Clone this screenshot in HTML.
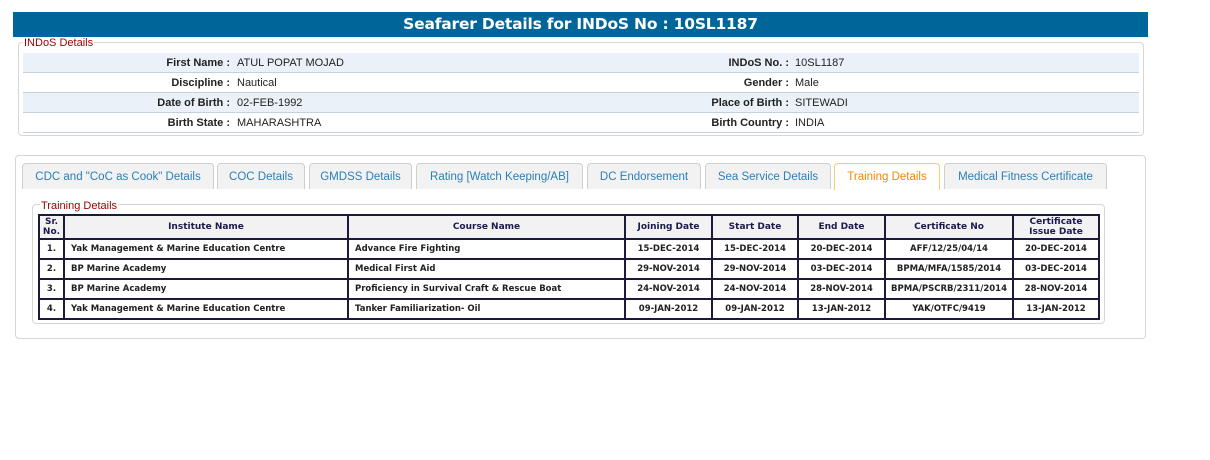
<!DOCTYPE html>
<html><head><style>
*{margin:0;padding:0;box-sizing:border-box}
body{width:1210px;height:460px;background:#fff;font-family:"Liberation Sans",Arial,sans-serif;position:relative;overflow:hidden}
.a{position:absolute}
.hdr{left:13px;top:12px;width:1135px;height:25px;background:#006699;color:#fff;font:bold 15.5px "DejaVu Sans",sans-serif;text-align:center;line-height:25px;letter-spacing:-0.2px}
.fs{border:1px solid #d6d6d6;border-radius:4px}
.lg{background:#fff;color:#990000;font-size:11px;padding:0 1px;line-height:12px}
.row{left:23px;width:1116px;height:20px;border-bottom:1px solid #c8d0d8;font-size:11px;color:#222;line-height:20px}
.row.b{background:#eaf1f8}
.row span{position:absolute}
.l{text-align:right}
.tab{top:163px;height:26px;border:1px solid #cfcfcf;border-bottom:none;border-radius:4px 4px 0 0;background:#f2f2f2;color:#2a7fb8;font-size:11.5px;text-align:center;line-height:26px}
.tab.on{background:#fff;border-color:#f0d070;color:#f08a00;height:27px}
table{border-collapse:collapse;font:bold 8.5px "DejaVu Sans",sans-serif;color:#222}
td,th{border:2px solid #1a1a3a;height:20px;text-align:center;padding:0}
th{background:#f2f2f2;color:#1a1a50;font-size:9px;height:24px;line-height:10px}
td.t{text-align:left;padding-left:6px}
</style></head><body>
<div class="a hdr">Seafarer Details for INDoS No : 10SL1187</div>
<div class="a fs" style="left:18px;top:42px;width:1126px;height:94px"></div>
<div class="a lg" style="left:23px;top:37px">INDoS Details</div>
<div class="a row b" style="top:53px"><span class="l" style="right:909px;font-weight:bold">First Name :</span><span style="left:214px">ATUL POPAT MOJAD</span><span class="l" style="right:350px;font-weight:bold">INDoS No. :</span><span style="left:772px">10SL1187</span></div>
<div class="a row" style="top:73px"><span class="l" style="right:909px;font-weight:bold">Discipline :</span><span style="left:214px">Nautical</span><span class="l" style="right:350px;font-weight:bold">Gender :</span><span style="left:772px">Male</span></div>
<div class="a row b" style="top:93px"><span class="l" style="right:909px;font-weight:bold">Date of Birth :</span><span style="left:214px">02-FEB-1992</span><span class="l" style="right:350px;font-weight:bold">Place of Birth :</span><span style="left:772px">SITEWADI</span></div>
<div class="a row" style="top:113px"><span class="l" style="right:909px;font-weight:bold">Birth State :</span><span style="left:214px">MAHARASHTRA</span><span class="l" style="right:350px;font-weight:bold">Birth Country :</span><span style="left:772px">INDIA</span></div>

<div class="a fs" style="left:15px;top:155px;width:1131px;height:184px"></div>
<div class="a tab" style="left:22px;width:192px">CDC and "CoC as Cook" Details</div>
<div class="a tab" style="left:217px;width:88px">COC Details</div>
<div class="a tab" style="left:309px;width:103px">GMDSS Details</div>
<div class="a tab" style="left:416px;width:167px">Rating [Watch Keeping/AB]</div>
<div class="a tab" style="left:587px;width:114px">DC Endorsement</div>
<div class="a tab" style="left:705px;width:126px">Sea Service Details</div>
<div class="a tab on" style="left:834px;width:106px">Training Details</div>
<div class="a tab" style="left:944px;width:163px">Medical Fitness Certificate</div>

<div class="a fs" style="left:32px;top:204px;width:1073px;height:120px"></div>
<div class="a lg" style="left:40px;top:200px">Training Details</div>
<table class="a" style="left:38px;top:214px;width:1062px">
<tr><th style="width:25px">Sr.<br>No.</th><th style="width:284px">Institute Name</th><th style="width:277px">Course Name</th><th style="width:87px">Joining Date</th><th style="width:86px">Start Date</th><th style="width:87px">End Date</th><th style="width:128px">Certificate No</th><th>Certificate<br>Issue Date</th></tr>
<tr><td>1.</td><td class="t">Yak Management &amp; Marine Education Centre</td><td class="t">Advance Fire Fighting</td><td>15-DEC-2014</td><td>15-DEC-2014</td><td>20-DEC-2014</td><td>AFF/12/25/04/14</td><td>20-DEC-2014</td></tr>
<tr><td>2.</td><td class="t">BP Marine Academy</td><td class="t">Medical First Aid</td><td>29-NOV-2014</td><td>29-NOV-2014</td><td>03-DEC-2014</td><td>BPMA/MFA/1585/2014</td><td>03-DEC-2014</td></tr>
<tr><td>3.</td><td class="t">BP Marine Academy</td><td class="t">Proficiency in Survival Craft &amp; Rescue Boat</td><td>24-NOV-2014</td><td>24-NOV-2014</td><td>28-NOV-2014</td><td>BPMA/PSCRB/2311/2014</td><td>28-NOV-2014</td></tr>
<tr><td>4.</td><td class="t">Yak Management &amp; Marine Education Centre</td><td class="t">Tanker Familiarization- Oil</td><td>09-JAN-2012</td><td>09-JAN-2012</td><td>13-JAN-2012</td><td>YAK/OTFC/9419</td><td>13-JAN-2012</td></tr>
</table>
</body></html>
